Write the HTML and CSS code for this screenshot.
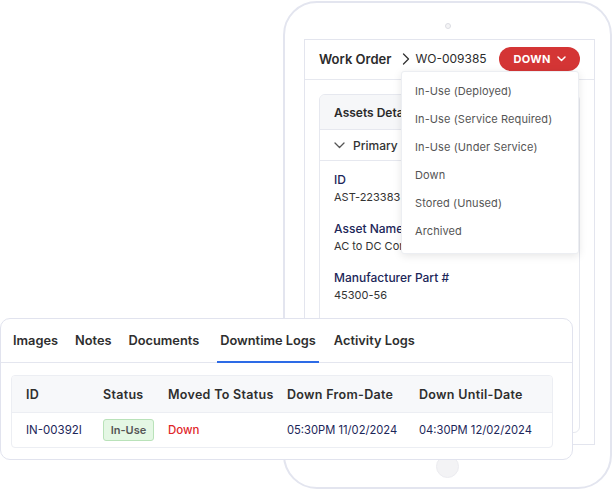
FILE: index.html
```html
<!DOCTYPE html>
<html>
<head>
<meta charset="utf-8">
<link rel="stylesheet" href="styles.css">
</head>
<body>
<div class="stage">
  <div class="phone">
    <div class="camera"></div>
    <div class="screen">
      <div class="wo-header">
        <span class="wo-title">Work Order</span>
        <svg class="crumb" width="8" height="12" viewBox="0 0 8 12"><path d="M1.5 1 L6.5 6 L1.5 11" fill="none" stroke="#333" stroke-width="1.3" stroke-linecap="round" stroke-linejoin="round"/></svg>
        <span class="wo-id">WO-009385</span>
        <span class="pill">DOWN
          <svg width="9" height="6" viewBox="0 0 9 6"><path d="M1 1 L4.5 4.5 L8 1" fill="none" stroke="#fff" stroke-width="1.5" stroke-linecap="round" stroke-linejoin="round"/></svg>
        </span>
      </div>
      <div class="screen-body">
        <div class="asset-card">
          <div class="asset-head">Assets Details</div>
          <div class="asset-section">
            <svg width="11" height="7" viewBox="0 0 11 7"><path d="M1 1 L5.5 5.5 L10 1" fill="none" stroke="#555" stroke-width="1.3" stroke-linecap="round" stroke-linejoin="round"/></svg>
            <span>Primary Details</span>
          </div>
          <div class="asset-fields">
            <div class="f-label">ID</div>
            <div class="f-value">AST-223383</div>
            <div class="f-label">Asset Name</div>
            <div class="f-value">AC to DC Converter</div>
            <div class="f-label">Manufacturer Part #</div>
            <div class="f-value">45300-56</div>
          </div>
        </div>
      </div>
      <div class="menu">
        <div class="menu-item">In-Use (Deployed)</div>
        <div class="menu-item">In-Use (Service Required)</div>
        <div class="menu-item">In-Use (Under Service)</div>
        <div class="menu-item">Down</div>
        <div class="menu-item">Stored (Unused)</div>
        <div class="menu-item">Archived</div>
      </div>
    </div>
    <div class="home"></div>
  </div>

  <div class="logs-card">
    <div class="tabs">
      <span class="tab">Images</span>
      <span class="tab">Notes</span>
      <span class="tab">Documents</span>
      <span class="tab active">Downtime Logs</span>
      <span class="tab">Activity Logs</span>
    </div>
    <div class="table">
      <div class="row head">
        <span>ID</span><span>Status</span><span>Moved To Status</span><span>Down From-Date</span><span>Down Until-Date</span>
      </div>
      <div class="row">
        <span class="cell-id">IN-00392I</span>
        <span><span class="badge">In-Use</span></span>
        <span class="down">Down</span>
        <span class="date">05:30PM 11/02/2024</span>
        <span class="date">04:30PM 12/02/2024</span>
      </div>
    </div>
  </div>
</div>
</body>
</html>
```

FILE: styles.css
```css
* { box-sizing: border-box; }
html, body { margin: 0; padding: 0; background: #fff; }
body {
  font-family: Inter, "Open Sans", "DejaVu Sans", sans-serif;
  color: #333;
  width: 614px;
  height: 491px;
  overflow: hidden;
}
.stage { position: relative; width: 614px; height: 491px; }

.phone {
  position: absolute;
  left: 283px;
  top: 1px;
  width: 329px;
  height: 488px;
  border: 2px solid #e3e5ef;
  border-radius: 34px;
  background: #fff;
  display: flex;
  flex-direction: column;
  align-items: center;
}
.camera {
  margin-top: 20px;
  width: 6px;
  height: 6px;
  border-radius: 50%;
  border: 1px solid #dcdde3;
  background: #f4f4f6;
}
.screen {
  position: relative;
  align-self: flex-start;
  margin-left: 19px;
  margin-top: 10px;
  width: 291px;
  height: 406px;
  border: 1px solid #e3e5ee;
}
.screen-body { height: 365px; padding: 14px 14px 0; overflow: hidden; }
.wo-header {
  height: 40px;
  display: flex;
  align-items: center;
  padding: 0 14px 2px;
  border-bottom: 1px solid #e6e8ef;
}
.wo-title { font-size: 13px; font-weight: 600; color: #2b2b2b; }
.crumb { margin-left: 11px; }
.wo-id { margin-left: 5px; font-size: 12px; color: #2b2b2b; }
.pill {
  margin-left: auto;
  width: 81px;
  height: 24px;
  border-radius: 12px;
  background: #d43535;
  color: #fff;
  font-size: 11px;
  font-weight: 700;
  letter-spacing: 0.3px;
  display: flex;
  align-items: center;
  justify-content: center;
  gap: 6px;
}

.asset-card {
  height: 339px;
  border: 1px solid #e6e8ef;
  border-radius: 6px;
  overflow: hidden;
}
.asset-head {
  height: 35px;
  background: #f6f7f9;
  border-bottom: 1px solid #e6e8ef;
  display: flex;
  align-items: center;
  padding-left: 14px;
  font-size: 12px;
  font-weight: 600;
  color: #2b2b2b;
  white-space: nowrap;
}
.asset-section {
  height: 31px;
  border-bottom: 1px solid #e6e8ef;
  display: flex;
  align-items: center;
  gap: 8px;
  padding-left: 14px;
  font-size: 12px;
  font-weight: 500;
  color: #333;
  white-space: nowrap;
}
.asset-fields { padding: 10px 14px 0; }
.f-label { font-size: 12px; font-weight: 500; color: #1c2659; line-height: 18px; white-space: nowrap; }
.f-value { font-size: 11px; color: #333; line-height: 17px; margin-bottom: 14px; white-space: nowrap; }

.menu {
  position: absolute;
  left: 96px;
  top: 31px;
  width: 178px;
  padding: 5px 0 8px;
  background: #fff;
  border: 1px solid #eceef2;
  border-radius: 3px;
  box-shadow: 0 2px 8px rgba(0,0,0,0.10);
}
.menu-item {
  height: 28px;
  line-height: 28px;
  padding-left: 13px;
  font-size: 11px;
  letter-spacing: 0.1px;
  color: #555;
}

.home {
  margin-top: 10px;
  width: 23px;
  height: 23px;
  border-radius: 50%;
  background: #f3f3f5;
  border: 1px solid #ececf0;
}

.logs-card {
  position: absolute;
  left: 0;
  top: 318px;
  width: 573px;
  height: 142px;
  background: #fff;
  border: 1px solid #e1e3ee;
  border-radius: 10px;
}
.tabs {
  height: 44px;
  display: flex;
  align-items: stretch;
  padding-left: 10px;
  border-bottom: 1px solid #e4e6ef;
  gap: 13px;
}
.tab {
  display: flex;
  align-items: center;
  padding: 0 2px;
  font-size: 12.8px;
  font-weight: 600;
  color: #2e2e2e;
  border-bottom: 2px solid transparent;
  margin-bottom: -1px;
}
.tab.active { border-bottom-color: #2d6be6; padding: 0 3px; margin-left: 3px; }

.table {
  margin: 12px 0 0 10px;
  width: 542px;
  border: 1px solid #eceef3;
  border-radius: 4px;
  overflow: hidden;
}
.row {
  display: grid;
  grid-template-columns: 91px 65px 119px 132px 1fr;
  align-items: center;
  height: 34px;
  font-size: 11.5px;
  white-space: nowrap;
}
.row > span:first-child { padding-left: 14px; }
.row.head {
  height: 37px;
  background: #f7f8fa;
  border-bottom: 1px solid #eceef3;
  font-weight: 600;
  color: #2e2e2e;
  font-size: 12.5px;
  letter-spacing: 0.3px;
}
.cell-id { color: #1c2659; }
.badge {
  display: inline-flex;
  align-items: center;
  justify-content: center;
  width: 51px;
  height: 22px;
  border: 1px solid #b9e2b9;
  background: #e4f7e4;
  border-radius: 3px;
  color: #555;
  font-weight: 600;
  font-size: 11px;
}
.down { color: #e0262a; font-weight: 500; }
.date { color: #1c2659; font-size: 11.2px; }
```
